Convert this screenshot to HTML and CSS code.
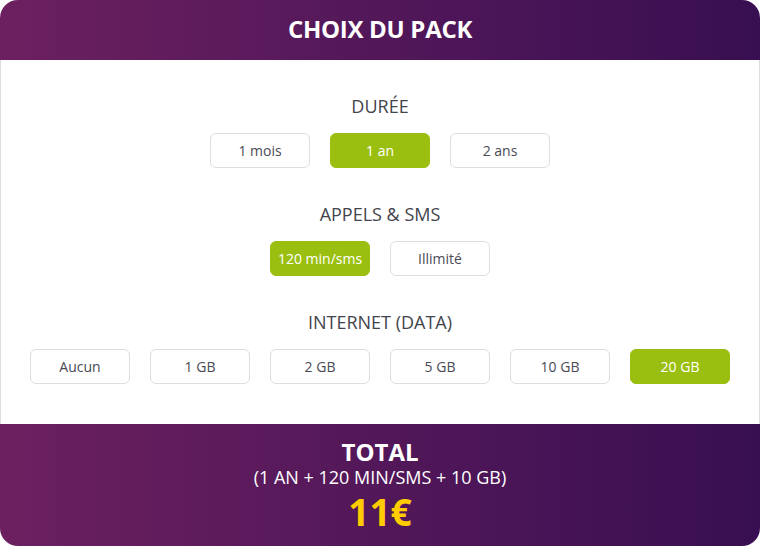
FILE: index.html
```html
<!DOCTYPE html>
<html lang="fr">
<head>
<meta charset="utf-8">
<link rel="stylesheet" href="styles.css">
</head>
<body>
<div class="card">
  <header class="head">CHOIX DU PACK</header>
  <main class="body">
    <section class="group">
      <h2 class="title">DURÉE</h2>
      <div class="opts">
        <span class="opt">1 mois</span>
        <span class="opt on">1 an</span>
        <span class="opt">2 ans</span>
      </div>
    </section>
    <section class="group">
      <h2 class="title">APPELS &amp; SMS</h2>
      <div class="opts">
        <span class="opt on">120 min/sms</span>
        <span class="opt">Illimité</span>
      </div>
    </section>
    <section class="group">
      <h2 class="title">INTERNET (DATA)</h2>
      <div class="opts">
        <span class="opt">Aucun</span>
        <span class="opt">1 GB</span>
        <span class="opt">2 GB</span>
        <span class="opt">5 GB</span>
        <span class="opt">10 GB</span>
        <span class="opt on">20 GB</span>
      </div>
    </section>
  </main>
  <footer class="foot">
    <div class="total">TOTAL</div>
    <div class="detail">(1 AN + 120 MIN/SMS + 10 GB)</div>
    <div class="price">11€</div>
  </footer>
</div>
</body>
</html>
```
FILE: styles.css
```css
* { box-sizing: border-box; }
html, body { margin: 0; padding: 0; background: #fff; }
body { font-family: "Open Sans", "Liberation Sans", sans-serif; }
.card { width: 760px; height: 546px; display: flex; flex-direction: column; }
.head {
  height: 60px;
  border-radius: 18px 18px 0 0;
  background: linear-gradient(90deg, #6c2060 0%, #380f52 100%);
  color: #fff;
  font-weight: 700;
  font-size: 24px;
  letter-spacing: -0.3px;
  display: flex; align-items: center; justify-content: center;
  padding-bottom: 4px;
}
.body {
  height: 364px;
  border-left: 1px solid #ddd;
  border-right: 1px solid #ddd;
  padding-top: 34px;
  display: flex; flex-direction: column; gap: 34px;
}
.group { display: flex; flex-direction: column; align-items: center; gap: 15px; }
.title {
  margin: 0;
  font-size: 18px;
  line-height: 24px;
  font-weight: 400;
  color: #44444c;
}
.opts { display: flex; gap: 20px; justify-content: center; }
.opt {
  width: 100px; height: 35px;
  border: 1px solid #dedede;
  border-radius: 6px;
  display: flex; align-items: center; justify-content: center;
  font-size: 14px;
  color: #4a4a55;
  background: #fff;
}
.opt.on { background: #9bbf10; border-color: #9bbf10; color: #fff; }
.foot {
  height: 122px;
  border-radius: 0 0 18px 18px;
  background: linear-gradient(90deg, #6c2060 0%, #380f52 100%);
  color: #fff;
  display: flex; flex-direction: column; align-items: center;
  padding-top: 14px;
}
.total { font-size: 24px; font-weight: 700; line-height: 28px; }
.detail { font-size: 18px; line-height: 22px; font-weight: 400; }
.price { font-size: 37px; font-weight: 700; line-height: 40px; color: #ffcc00; margin-top: 4px; }
```
